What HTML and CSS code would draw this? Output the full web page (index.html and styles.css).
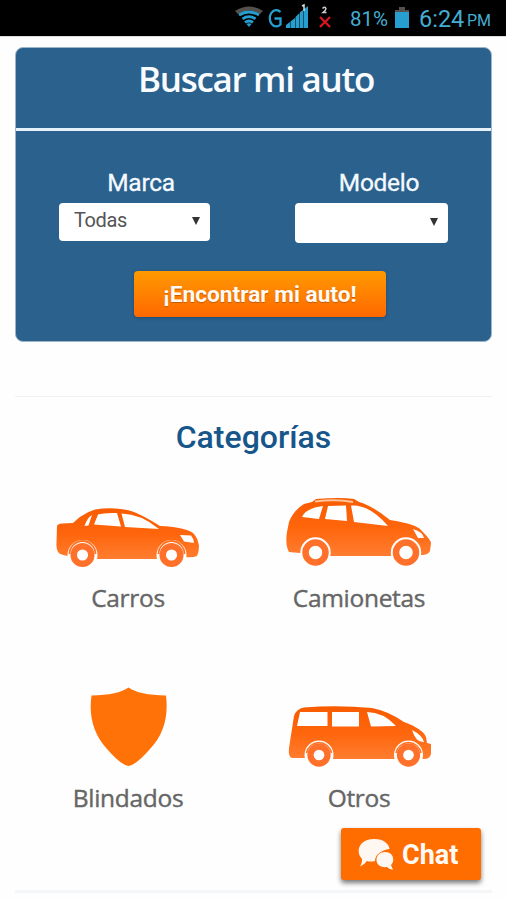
FILE: index.html
```html
<!DOCTYPE html>
<html lang="es">
<head>
<meta charset="utf-8">
<title>Buscar mi auto</title>
<link rel="stylesheet" href="styles.css">
</head>
<body>
<header class="status">
  <svg class="status-icons" viewBox="0 0 100 36" width="100" height="36">
    <path d="M0 11Q14 2 28 11L25 14Q14 7 3 14Z" fill="#55504b"/>
    <g fill="none" stroke="#269fd0" stroke-width="2.800">
      <path d="M4 15Q14 9 24 15"/><path d="M7.500 18.800Q14 14.500 20.500 18.800"/><path d="M10 22.400Q14 19.500 18 22.400"/>
    </g>
    <path d="M11.500 24Q14 22.500 16.500 24L14 27Z" fill="#269fd0"/>
    <path d="M45.500 12A6.500 8.200 0 1 0 45.500 24.500V18.500H39.500" fill="none" stroke="#269fd0" stroke-width="2.300"/>
    <path d="M51 28V25L55 22V28ZM55.500 28V21.500L60 18V28ZM60.500 28V17L64.500 13V28ZM65 28V12L68.500 10V28ZM69 28V9L73 6V28Z" fill="#269fd0"/>
    <path d="M67 6L69 5V11" fill="none" stroke="#ddd" stroke-width="1.500"/>
    <path d="M87.500 8.500Q90 6 91 8.500Q91 10 88 12.500H91.500" fill="none" stroke="#ccc" stroke-width="1.500"/>
    <path d="M85 17L95 27M95 17L85 27" stroke="#d31722" stroke-width="2.400"/>
  </svg>
  <span class="percent">81%</span>
  <svg class="battery" viewBox="0 0 14 22" width="14" height="22"><path d="M0 3H4V0H10V3H14V6H0Z" fill="#55504b"/><path d="M0 5H14V21H0Z" fill="#269fd0"/></svg>
  <span class="clock">6:24</span><span class="ampm">PM</span>
</header>
<main>
  <section class="search">
    <h1><span>Buscar mi auto</span></h1>
    <div class="fields">
      <div class="field make"><label>Marca</label><div class="select"><span>Todas</span><i></i></div></div>
      <div class="field model"><label>Modelo</label><div class="select"><span></span><i></i></div></div>
    </div>
    <button class="find">¡Encontrar mi auto!</button>
  </section>
  <section class="categories">
    <h2>Categorías</h2>
    <div class="grid">
      <a class="cat">
        <svg viewBox="46 490 165 90" width="165" height="90">
          <defs><linearGradient id="g" x1="0" y1="0" x2="0" y2="1"><stop offset="0" stop-color="#f85c00"/><stop offset=".5" stop-color="#ff650b"/><stop offset="1" stop-color="#ff7d30"/></linearGradient></defs>
          <path fill="url(#g)" d="M57 526Q58 523.500 62 523.500L73 523Q87 509 103 508.500Q121 507.500 134 512Q146 517 160 526Q184 527 193 533Q198 538 199 546Q199 552 197 556Q193 558 184 557L158 559H97L69 556Q60 555 58 552Q56 548 56.500 543Z"/>
          <path fill="#fff" d="M84.500 526Q87 518 92 515L88.500 525.500ZM94 524.500L98 514.500Q104 512.500 117 513L121 526.500ZM121.500 513.500Q141 514 159 529L125 527ZM180 535L191 535.500Q194 539 194 543L184 541.500Z"/>
          <g fill="#fff"><circle cx="82.500" cy="555" r="15"/><circle cx="171.500" cy="555" r="15"/></g>
          <path d="M69.500 554A13 13 0 0 1 95.500 554M158.500 554A13 13 0 0 1 184.500 554" fill="none" stroke="#ff7424" stroke-width="1.800"/>
          <g fill="#fff" stroke="#ff702a" stroke-width="6.500"><circle cx="82.500" cy="555" r="8.800"/><circle cx="171.500" cy="555" r="8.800"/></g>
        </svg><span class="carros">Carros</span></a>
      <a class="cat right">
        <svg viewBox="276 490 165 90" width="165" height="90">
          <path fill="url(#g)" d="M287 532L289 522Q293 511 304 504L312 502L316 499Q340 497 354 499L359 502Q373 506 390 520Q416 524 421 530Q431 540 431 543L430 551Q428 555 422 555L395 556H326L300 553L289 552Q285 545 287 532Z"/>
          <path d="M315 501.500Q337 499 353 502" fill="none" stroke="#ffc49c" stroke-width="2"/>
          <path fill="#fff" d="M302 517Q306 508 323 506L319 519ZM328 506L346 505.500L347 521L325 519ZM351 505.500Q369 504 388 526L354 522ZM413 529Q423 532 424 538L418 538Z"/>
          <g fill="#fff"><circle cx="315.500" cy="552.500" r="15.200"/><circle cx="406" cy="552.500" r="15.200"/></g>
          <g fill="#fff" stroke="#ff702a" stroke-width="6.500"><circle cx="315.500" cy="552.500" r="10"/><circle cx="406" cy="552.500" r="10"/></g>
        </svg><span class="camionetas">Camionetas</span></a>
      <a class="cat">
        <svg viewBox="46 690 165 90" width="165" height="90" overflow="visible">
          <path fill="#ff7208" d="M128.500 687.500Q139 695 166 695.500Q170 728 150 749Q136 765 128.500 766Q121 765 107 749Q87 727 91.500 695.500Q118 695 128.500 687.500Z"/>
        </svg><span class="blindados">Blindados</span></a>
      <a class="cat right">
        <svg viewBox="276 690 165 90" width="165" height="90">
          <path fill="url(#g)" d="M294 716Q296 709 304 707.500Q338 705 372 708Q388 711 404 722Q423 729 426 737L427 743L431 744V754Q430 759 424 759H334L305 758L292 758Q288 757 289 748Z"/>
          <path fill="#fff" d="M300 712H327.500V726H297ZM332 712H359V726.500H332ZM367 712Q383 712 396 726L371 726.500ZM412 730Q422 735 424 742Q416 743 412 730Z"/>
          <g fill="#fff"><circle cx="319" cy="755" r="14.500"/><circle cx="408.500" cy="755" r="14.500"/></g>
          <path d="M306.500 753A12.700 12.700 0 0 1 331.500 753M396 753A12.700 12.700 0 0 1 421 753" fill="none" stroke="#ff7424" stroke-width="1.500"/>
          <g fill="#fff" stroke="#ff702a" stroke-width="6.300"><circle cx="319" cy="755" r="8.500"/><circle cx="408.500" cy="755" r="8.500"/></g>
        </svg><span class="otros">Otros</span></a>
    </div>
  </section>
</main>
<button class="chat">
  <svg viewBox="358 837 37 33" width="37" height="33"><path fill="#fff8f2" d="M374 838C384 838 389 843 389.500 848C381 849 375 854 375 860Q370 861 367 860Q364 864 360 865.500Q362.500 862 362 858C355 851 359 838 374 838Z"/><path fill="#fff8f2" d="M385 851C393 851 395.500 859 391 864L393 869Q389 868 387 866C380 867 376.500 863 376.500 859C376.500 854 380 851 385 851Z"/></svg>
  <span>Chat</span>
</button>
</body>
</html>
```
FILE: styles.css
```css
* { box-sizing: border-box; }
body { margin: 0; height: 900px; overflow: hidden; position: relative; background: #fefefe; font-family: Roboto, "Noto Sans", sans-serif; }
button { border: 0; padding: 0; font-family: inherit; }
span { white-space: nowrap; }
.status { height: 36px; background: #000; color: #45add3; display: flex; align-items: flex-start; padding-left: 235px; line-height: 39px; }
.status-icons { flex: none; }
.percent { font-size: 20.5px; margin-left: 15px; width: 38px; }
.battery { margin: 7px 0 0 7px; flex: none; }
.clock { font-size: 23.5px; margin-left: 10px; width: 45px; }
.ampm { font-size: 16px; line-height: 42px; margin-left: 3px; }
main { border-top: 1px solid #ddd; padding: 10px 14px 0 15px; }
.search { height: 295px; background: #2b618d; border: 1px solid #9bb6ca; border-radius: 8px; overflow: hidden; }
h1 { margin: 0; height: 83px; padding-left: 5px; border-bottom: 3px solid #e4f1f8; color: #f8fcff; text-align: center; font: 600 35px/62px "Open Sans", sans-serif; letter-spacing: -1.3px; }
.fields { display: flex; height: 140px; padding: 34px 43px 0; justify-content: space-between; }
.field { width: 151px; }
.model { width: 153px; }
.field label { display: block; height: 38px; line-height: 36px; color: #f4faff; font-size: 24.5px; letter-spacing: -0.3px; -webkit-text-stroke: 0.3px; text-align: center; padding-left: 13px; }
.field.model label { padding-left: 15px; }
.select { height: 38px; border-radius: 4px; background: #fff; display: flex; align-items: center; justify-content: space-between; padding: 0 10px 4px 15px; font-size: 20px; letter-spacing: -0.4px; color: #555; }
.model .select { height: 40px; }
.select i { border: 4px solid transparent; border-top: 8px solid #333; border-bottom: 0; margin-top: 2px; }
.find { display: block; margin: 0 0 0 118px; width: 252px; height: 46px; border-radius: 4px; background: linear-gradient(#ff9a00, #ff6800); box-shadow: 0 1px 3px #214b6c; color: #fffaf4; font-size: 22.7px; line-height: 48px; font-weight: 700; text-shadow: 0 1px 1px #c45b00; }
.categories { margin-top: 54px; border-top: 1px solid #f1f1f1; border-bottom: 3px solid #f5f6f7; height: 497px; }
h2 { margin: 0; height: 93px; text-align: center; color: #17568a; font-weight: 500; font-size: 32px; line-height: 81px; }
.grid { display: grid; grid-template-columns: 226px 1fr; grid-template-rows: 200px 200px; }
.cat { display: flex; flex-direction: column; align-items: center; color: #666; font: 24.5px/36px "Open Sans", sans-serif; letter-spacing: -0.3px; -webkit-text-stroke: 0.4px #666; }
.cat svg { flex: none; -webkit-text-stroke: 0; }
.right { padding-right: 15px; }
.right svg { position: relative; left: -1px; }
.chat { position: absolute; left: 341px; top: 828px; width: 140px; height: 52px; border-radius: 3px; background: #ff6c00; box-shadow: 0 3px 5px #777; display: flex; align-items: center; padding: 2px 0 0 17px; gap: 7px; color: #fffaf5; font-size: 27px; font-weight: 700; }
.chat svg { margin-top: -2px; }
```
